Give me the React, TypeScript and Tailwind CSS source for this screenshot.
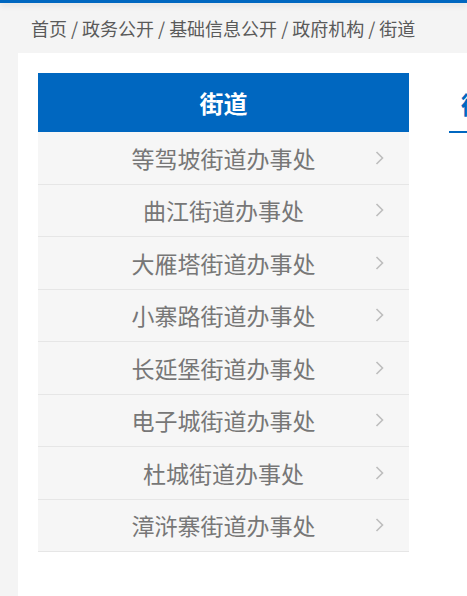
const items = [
  '等驾坡街道办事处',
  '曲江街道办事处',
  '大雁塔街道办事处',
  '小寨路街道办事处',
  '长延堡街道办事处',
  '电子城街道办事处',
  '杜城街道办事处',
  '漳浒寨街道办事处',
]

const crumbs = ['首页', '政务公开', '基础信息公开', '政府机构', '街道']

function Arrow() {
  return (
    <svg
      className="absolute right-[25px] top-1/2 -translate-y-1/2"
      width="9"
      height="15"
      viewBox="0 0 9 15"
      fill="none"
    >
      <polyline points="1.5,1.5 7.5,7.5 1.5,13.5" stroke="#bdbdbd" strokeWidth="1.6" />
    </svg>
  )
}

export default function App() {
  return (
    <div
      className="w-[467px] h-[596px] overflow-hidden bg-[#f4f4f4] flex flex-col"
      style={{ fontFamily: '"Microsoft YaHei", "Noto Sans CJK SC", sans-serif' }}
    >
      {/* top bar */}
      <div className="h-[3px] bg-[#0067c0] shadow-[0_2px_6px_rgba(0,0,0,0.12)] shrink-0" />

      {/* breadcrumb */}
      <div className="h-[50px] pl-[31px] flex items-center text-[18px] text-[#5a5a5a] whitespace-nowrap">
        {crumbs.map((c, i) => (
          <span key={c} className="flex items-center">
            {i > 0 && <span className="mx-[4px]">/</span>}
            {c}
          </span>
        ))}
      </div>

      {/* main panel */}
      <div className="ml-[18px] flex-1 bg-white pt-[20px] pl-[20px] flex gap-[40px]">
        <div className="w-[371px] shrink-0">
          <div className="h-[59px] bg-[#0067c0] flex items-center justify-center text-white text-[24px] font-bold">
            街道
          </div>
          {items.map((name) => (
            <div
              key={name}
              className="relative h-[52.5px] bg-[#f6f6f6] border-b border-[#e6e6e6] flex items-center justify-center text-[23px] text-[#777]"
            >
              {name}
              <Arrow />
            </div>
          ))}
        </div>

        <div className="flex-1 min-w-0">
          <div className="inline-block border-b-2 border-[#0067c0] pt-[13px] pb-[9px] pl-[12px] text-[24px] font-bold text-[#0067c0] whitespace-nowrap">
            街道办事处
          </div>
        </div>
      </div>
    </div>
  )
}
